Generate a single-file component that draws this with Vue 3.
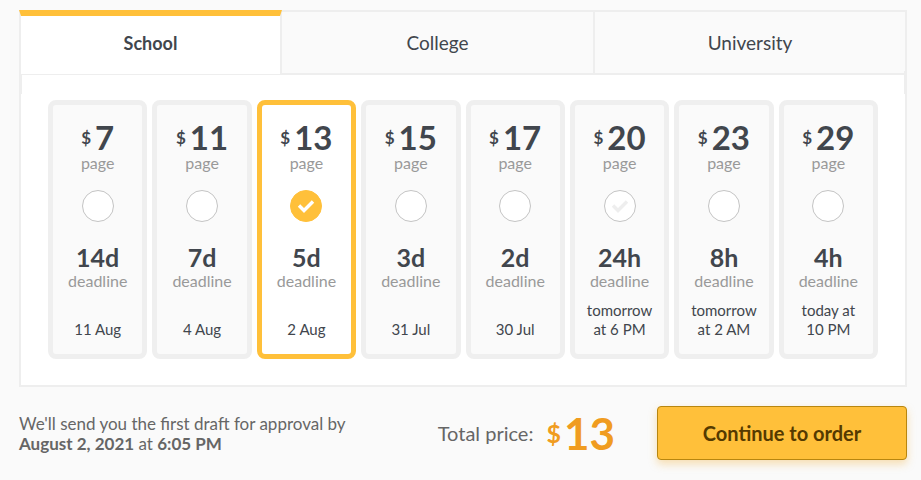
<script setup>
import { ref, computed } from 'vue'

const levels = ['School', 'College', 'University']
const level = ref('School')

const options = [
  { price: 7, term: '14d', date: ['11 Aug'] },
  { price: 11, term: '7d', date: ['4 Aug'] },
  { price: 13, term: '5d', date: ['2 Aug'] },
  { price: 15, term: '3d', date: ['31 Jul'] },
  { price: 17, term: '2d', date: ['30 Jul'] },
  { price: 20, term: '24h', date: ['tomorrow', 'at 6 PM'], hinted: true },
  { price: 23, term: '8h', date: ['tomorrow', 'at 2 AM'] },
  { price: 29, term: '4h', date: ['today at', '10 PM'] },
]
const term = ref('5d')
const total = computed(() => options.find((o) => o.term === term.value).price)
</script>

<template>
  <main class="calculator">
    <div class="tabs" role="tablist">
      <button
        v-for="name in levels"
        :key="name"
        type="button"
        role="tab"
        class="tab"
        :class="{ active: name === level }"
        :aria-selected="name === level"
        @click="level = name"
      >{{ name }}</button>
    </div>

    <section class="panel">
      <div class="cards">
        <label
          v-for="o in options"
          :key="o.term"
          class="card"
          :class="{ selected: o.term === term, hinted: o.hinted }"
        >
          <span class="price"><span class="currency">$</span><span class="amount">{{ o.price }}</span></span>
          <span class="caption">page</span>
          <span class="choice">
            <input v-model="term" type="radio" name="deadline" :value="o.term" />
            <svg class="check" viewBox="0 0 18 14" aria-hidden="true">
              <path d="M2 6.5 L7 11.5 L16 2.5" fill="none" stroke="currentColor" stroke-width="3.4" />
            </svg>
          </span>
          <span class="term">{{ o.term }}</span>
          <span class="caption">deadline</span>
          <span class="date"><span v-for="line in o.date" :key="line" class="line">{{ line }}</span></span>
        </label>
      </div>
    </section>

    <footer class="summary">
      <p class="note">
        We'll send you the first draft for approval by<br />
        <b>August 2, 2021</b> at <b>6:05 PM</b>
      </p>
      <div class="total">
        <span class="total-label">Total price:</span>
        <span class="total-currency">$</span>
        <span class="total-amount">{{ total }}</span>
      </div>
      <button type="button" class="order">Continue to order</button>
    </footer>
  </main>
</template>

<style>
body {
  background: #fafafa;
}
</style>

<style scoped>
.calculator {
  padding: 10px 14px 20px 19px;
  font-family: Lato, "Liberation Sans", sans-serif;
  color: #41464d;
}
.tabs {
  display: grid;
  grid-template-columns: 263fr 313fr 312fr;
  height: 63px;
}
.tab {
  box-sizing: border-box;
  height: 63px;
  padding: 0;
  border: solid #eee;
  border-width: 2px 2px 0 0;
  background: #fafafa;
  color: inherit;
  font: 400 19px/24px Lato, "Liberation Sans", sans-serif;
}
.tab:first-child {
  border-left-width: 2px;
}
.tab.active {
  position: relative;
  z-index: 1;
  height: 64px;
  border-top: 6px solid #ffc03a;
  padding-bottom: 5px;
  background: #fff;
  font-size: 18px;
  font-weight: 700;
}
.panel {
  position: relative;
  padding: 25px 27px 26px;
  border: 2px solid #eee;
  background: #fff;
}
.panel::before,
.panel::after {
  content: "";
  position: absolute;
  top: -4px;
  width: 1px;
  height: 23px;
  background: #eee;
}
.panel::before {
  left: 0;
}
.panel::after {
  right: 0;
}
.cards {
  display: grid;
  grid-template-columns: repeat(8, 1fr);
  gap: 5px;
}
.card {
  display: flex;
  flex-direction: column;
  align-items: center;
  padding: 16px 0 15px;
  border: 5px solid #efefef;
  border-radius: 8px;
  background: #fafafa;
  text-align: center;
  cursor: pointer;
}
.card.selected {
  border-color: #ffc03a;
  background: #fff;
}
.price {
  display: flex;
  align-items: center;
  gap: 4px;
  height: 33px;
  font-weight: 700;
}
.currency {
  font-size: 17px;
  line-height: 33px;
}
.amount {
  font-size: 33px;
  line-height: 33px;
}
.caption {
  font-size: 16px;
  line-height: 18px;
  color: #999;
}
.choice {
  display: grid;
  place-items: center;
  margin: 18px 0 20px;
}
.choice > * {
  grid-area: 1 / 1;
}
.choice input {
  appearance: none;
  box-sizing: border-box;
  width: 32px;
  height: 32px;
  margin: 0;
  border: 1px solid #c4c4c4;
  border-radius: 50%;
  background: #fff;
}
.choice input:checked {
  border-color: #ffc03a;
  background: #ffc03a;
}
.check {
  width: 18px;
  height: 14px;
  color: transparent;
  pointer-events: none;
}
.selected .check {
  color: #fff;
}
.hinted:not(.selected) .check {
  color: #eee;
}
.term {
  font-size: 25px;
  line-height: 30px;
  font-weight: 700;
}
.date {
  display: flex;
  flex-direction: column;
  justify-content: flex-end;
  height: 38px;
  margin-top: 11px;
  font-size: 15px;
  line-height: 19px;
}
.summary {
  display: flex;
  align-items: center;
  padding-top: 19px;
  color: #666;
}
.note {
  flex: 1;
  margin: 0;
  padding-top: 2px;
  font-size: 17px;
  line-height: 20px;
}
.total {
  display: flex;
  align-items: center;
  margin-right: 42px;
}
.total-label {
  margin-right: 13px;
  font-size: 20px;
}
.total-currency {
  margin-right: 3px;
  font-size: 25px;
  color: #f09c20;
  font-weight: 700;
}
.total-amount {
  font-size: 44px;
  line-height: 54px;
  font-weight: 700;
  color: #f09c20;
}
.order {
  box-sizing: border-box;
  width: 250px;
  height: 54px;
  border: 1px solid #b8860f;
  border-radius: 4px;
  background: #ffc03a;
  box-shadow: 0 4px 8px rgba(240, 170, 40, 0.35);
  color: #553a00;
  font: 700 20px/24px Lato, "Liberation Sans", sans-serif;
}
</style>
